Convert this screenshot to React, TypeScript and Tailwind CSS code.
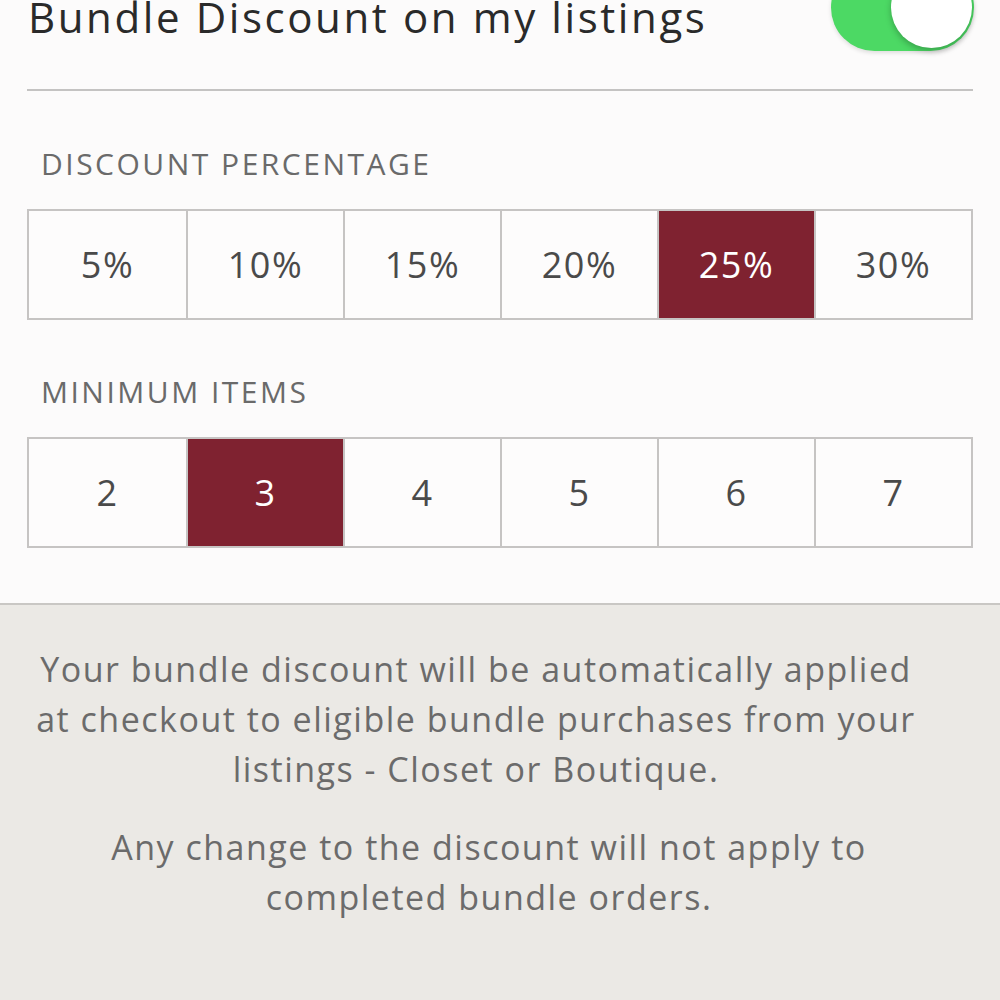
import React, { useState } from 'react';

const percentages = ['5%', '10%', '15%', '20%', '25%', '30%'];
const minItems = ['2', '3', '4', '5', '6', '7'];

function OptionRow({
  options,
  selected,
  onSelect,
}: {
  options: string[];
  selected: string;
  onSelect: (v: string) => void;
}) {
  return (
    <div className="mx-[27px] grid grid-cols-6 border-2 border-[#c6c4c3] bg-[#fdfcfc]">
      {options.map((opt, i) => {
        const active = opt === selected;
        return (
          <button
            key={opt}
            onClick={() => onSelect(opt)}
            className={`h-[107px] flex items-center justify-center text-[36px] tracking-[1.5px] ${
              i > 0 ? 'border-l-2 border-[#c6c4c3]' : ''
            } ${active ? 'bg-[#7f2230] text-white' : 'text-[#4a4a4a]'}`}
          >
            {opt}
          </button>
        );
      })}
    </div>
  );
}

export default function App() {
  const [enabled, setEnabled] = useState(true);
  const [pct, setPct] = useState('25%');
  const [items, setItems] = useState('3');

  return (
    <div className="w-[1000px] h-[1000px] overflow-hidden bg-[#ebe9e5] font-['Open_Sans',sans-serif]">
      <div className="bg-[#fcfbfb] pb-[55px]">
        {/* Header row with toggle */}
        <div className="flex items-center justify-between pl-[28px] pr-[26px] -mt-[37px] h-[88px]">
          <h1 className="text-[42px] text-[#2a2a2a] leading-none pt-[20px] tracking-[2.6px]">
            Bundle Discount on my listings
          </h1>
          <button
            onClick={() => setEnabled(!enabled)}
            className={`relative w-[143px] h-[87px] rounded-full shadow-[0_2px_4px_rgba(0,0,0,0.12)] ${
              enabled ? 'bg-[#4cd964]' : 'bg-[#e5e5e5]'
            }`}
          >
            <span
              className={`absolute top-[3px] w-[81px] h-[81px] rounded-full bg-white shadow-[0_3px_6px_rgba(0,0,0,0.25)] ${
                enabled ? 'right-[2px]' : 'left-[2px]'
              }`}
            />
          </button>
        </div>

        <div className="mx-[27px] mt-[38px] h-[2px] bg-[#c4c3c2]" />

        <div className="pl-[41px] pt-[58px] pb-[30px] text-[30px] leading-none text-[#6a6a6a] tracking-[2.5px]">
          DISCOUNT PERCENTAGE
        </div>
        <OptionRow options={percentages} selected={pct} onSelect={setPct} />

        <div className="pl-[41px] pt-[57px] pb-[30px] text-[30px] leading-none text-[#6a6a6a] tracking-[2.5px]">
          MINIMUM ITEMS
        </div>
        <OptionRow options={minItems} selected={items} onSelect={setItems} />
      </div>

      <div className="border-t-2 border-[#c9c7c4] pt-[39px] text-center text-[34px] leading-[50px] text-[#6b6b6b] tracking-[1.5px]">
        <p className="pr-[48px]">
          Your bundle discount will be automatically applied
          <br />
          at checkout to eligible bundle purchases from your
          <br />
          listings - Closet or Boutique.
        </p>
        <p className="mt-[28px] pr-[22px]">
          Any change to the discount will not apply to
          <br />
          completed bundle orders.
        </p>
      </div>
    </div>
  );
}
